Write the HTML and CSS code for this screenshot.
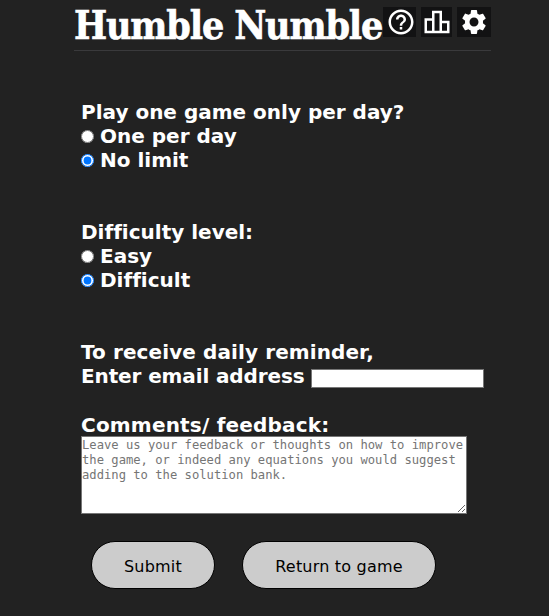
FILE: index.html
```html
<!DOCTYPE html>
<html lang="en">
<head>
<meta charset="utf-8">
<title>Humble Numble</title>
<link rel="stylesheet" href="styles.css">
</head>
<body>
<main class="game">
  <header class="header">
    <h1 class="title">Humble Numble</h1>
    <button class="icon help" aria-label="Help"><svg viewBox="0 0 24 24"><path d="M11 18h2v-2h-2v2zm1-16C6.48 2 2 6.48 2 12s4.48 10 10 10 10-4.480 10-10S17.520 2 12 2zm0 18c-4.410 0-8-3.590-8-8s3.590-8 8-8 8 3.590 8 8-3.590 8-8 8zm0-14c-2.210 0-4 1.790-4 4h2c0-1.100.9-2 2-2s2 .9 2 2c0 2-3 1.750-3 5h2c0-2.250 3-2.500 3-5 0-2.210-1.790-4-4-4z"/></svg></button>
    <button class="icon stats" aria-label="Statistics"><svg viewBox="0 0 24 24"><path d="M16 11V3H8v6H2v12h20V11h-6zm-6-6h4v14h-4V5zm-6 6h4v8H4v-8zm16 8h-4v-6h4v6z"/></svg></button>
    <button class="icon settings" aria-label="Settings"><svg viewBox="0 0 24 24"><path d="M19.140 12.940c.04-.3.06-.61.06-.94 0-.32-.02-.64-.07-.94l2.030-1.580c.18-.14.23-.41.12-.61l-1.920-3.320c-.12-.22-.37-.29-.59-.22l-2.390.96c-.5-.38-1.030-.7-1.620-.94l-.36-2.540c-.04-.24-.24-.41-.48-.41h-3.840c-.24 0-.43.17-.47.41l-.36 2.540c-.59.24-1.130.57-1.620.94l-2.390-.96c-.22-.08-.47 0-.59.22L2.740 8.870c-.12.21-.08.47.12.61l2.030 1.580c-.05.3-.09.63-.09.94s.02.64.07.94l-2.030 1.580c-.18.14-.23.41-.12.61l1.920 3.320c.12.22.37.29.59.22l2.390-.96c.5.38 1.030.7 1.620.94l.36 2.540c.05.24.24.41.48.41h3.840c.24 0 .44-.17.47-.41l.36-2.540c.59-.24 1.130-.56 1.620-.94l2.390.96c.22.08.47 0 .59-.22l1.920-3.320c.12-.22.07-.47-.12-.61l-2.010-1.580zM12 15.600c-1.980 0-3.600-1.620-3.600-3.600s1.620-3.600 3.600-3.600 3.600 1.620 3.600 3.600-1.620 3.600-3.600 3.600z"/></svg></button>
  </header>
  <form class="form">
    <section class="group">
      <div class="line">Play one game only per day?</div>
      <label class="line"><input class="radio" type="radio" name="limit">One per day</label>
      <label class="line"><input class="radio" type="radio" name="limit" checked>No limit</label>
    </section>
    <section class="group">
      <div class="line">Difficulty level:</div>
      <label class="line"><input class="radio" type="radio" name="level">Easy</label>
      <label class="line"><input class="radio" type="radio" name="level" checked>Difficult</label>
    </section>
    <section class="group reminder">
      <div class="line wide">To receive daily reminder,</div>
      <label class="line tight">Enter email address<input class="email" type="text"></label>
    </section>
    <section>
      <div class="line wider">Comments/ feedback:</div>
      <textarea class="feedback" placeholder="Leave us your feedback or thoughts on how to improve the game, or indeed any equations you would suggest adding to the solution bank."></textarea>
    </section>
    <div class="actions">
      <button class="button submit" type="button">Submit</button>
      <button class="button return" type="button">Return to game</button>
    </div>
  </form>
</main>
</body>
</html>
```
FILE: styles.css
```css
* { box-sizing: border-box; }
body {
  margin: 0;
  background: #222;
  color: #fff;
  font-family: Verdana, "DejaVu Sans", sans-serif;
  font-variant-ligatures: none;
  overflow: hidden;
}
.game { width: 417px; margin-left: 74px; }
.header {
  display: flex;
  align-items: flex-start;
  height: 51px;
  padding-top: 7px;
  border-bottom: 1px solid #3a3a3c;
}
.title {
  width: 309px;
  margin: -7px 0 0;
  font: bold 39px/50px "Roboto Slab", "DejaVu Serif Condensed", "DejaVu Serif", serif;
  font-stretch: condensed;
  letter-spacing: -1.15px;
  -webkit-text-stroke: 0.6px #fff;
  white-space: nowrap;
}
.icon {
  display: flex;
  align-items: center;
  justify-content: center;
  flex: none;
  height: 30px;
  padding: 0;
  border: 0;
  background: #121213;
}
.icon svg { flex: none; width: 30px; height: 30px; fill: #fff; }
.help { width: 33px; padding-left: 2px; }
.stats { width: 31px; margin-left: 5px; }
.settings { width: 34px; margin-left: 5px; }
.form {
  padding: 49px 0 0 7px;
  font-size: 20px;
  font-weight: bold;
}
.group { margin-bottom: 48px; }
.reminder { margin-bottom: 25px; }
.line {
  display: flex;
  align-items: center;
  height: 24px;
  line-height: 24px;
  white-space: nowrap;
}
.wide { letter-spacing: 0.1px; }
.wider { letter-spacing: 0.2px; }
.tight { letter-spacing: -0.12px; }
.radio { flex: none; width: 13px; height: 13px; margin: 1px 6px 0 0; }
.email {
  width: 173px;
  height: 19px;
  margin: 5px 0 0 6px;
  border: 1px solid #767676;
  background: #fff;
}
.feedback {
  display: block;
  width: 386px;
  height: 78px;
  margin-top: -1px;
  padding: 1px 0;
  border: 1px solid #767676;
  background: #fff;
  font: 12.18px/15px "DejaVu Sans Mono", monospace;
}
.feedback::placeholder { color: #757575; }
.actions { display: flex; gap: 27px; margin: 27px 0 0 10px; }
.button {
  height: 48px;
  padding: 2px 0 0;
  border: 1px solid #000;
  border-radius: 24px;
  background: #ccc;
  color: #000;
  font: 16px Verdana, "DejaVu Sans", sans-serif;
  letter-spacing: 0.2px;
}
.submit { width: 124px; }
.return { width: 194px; }
```
